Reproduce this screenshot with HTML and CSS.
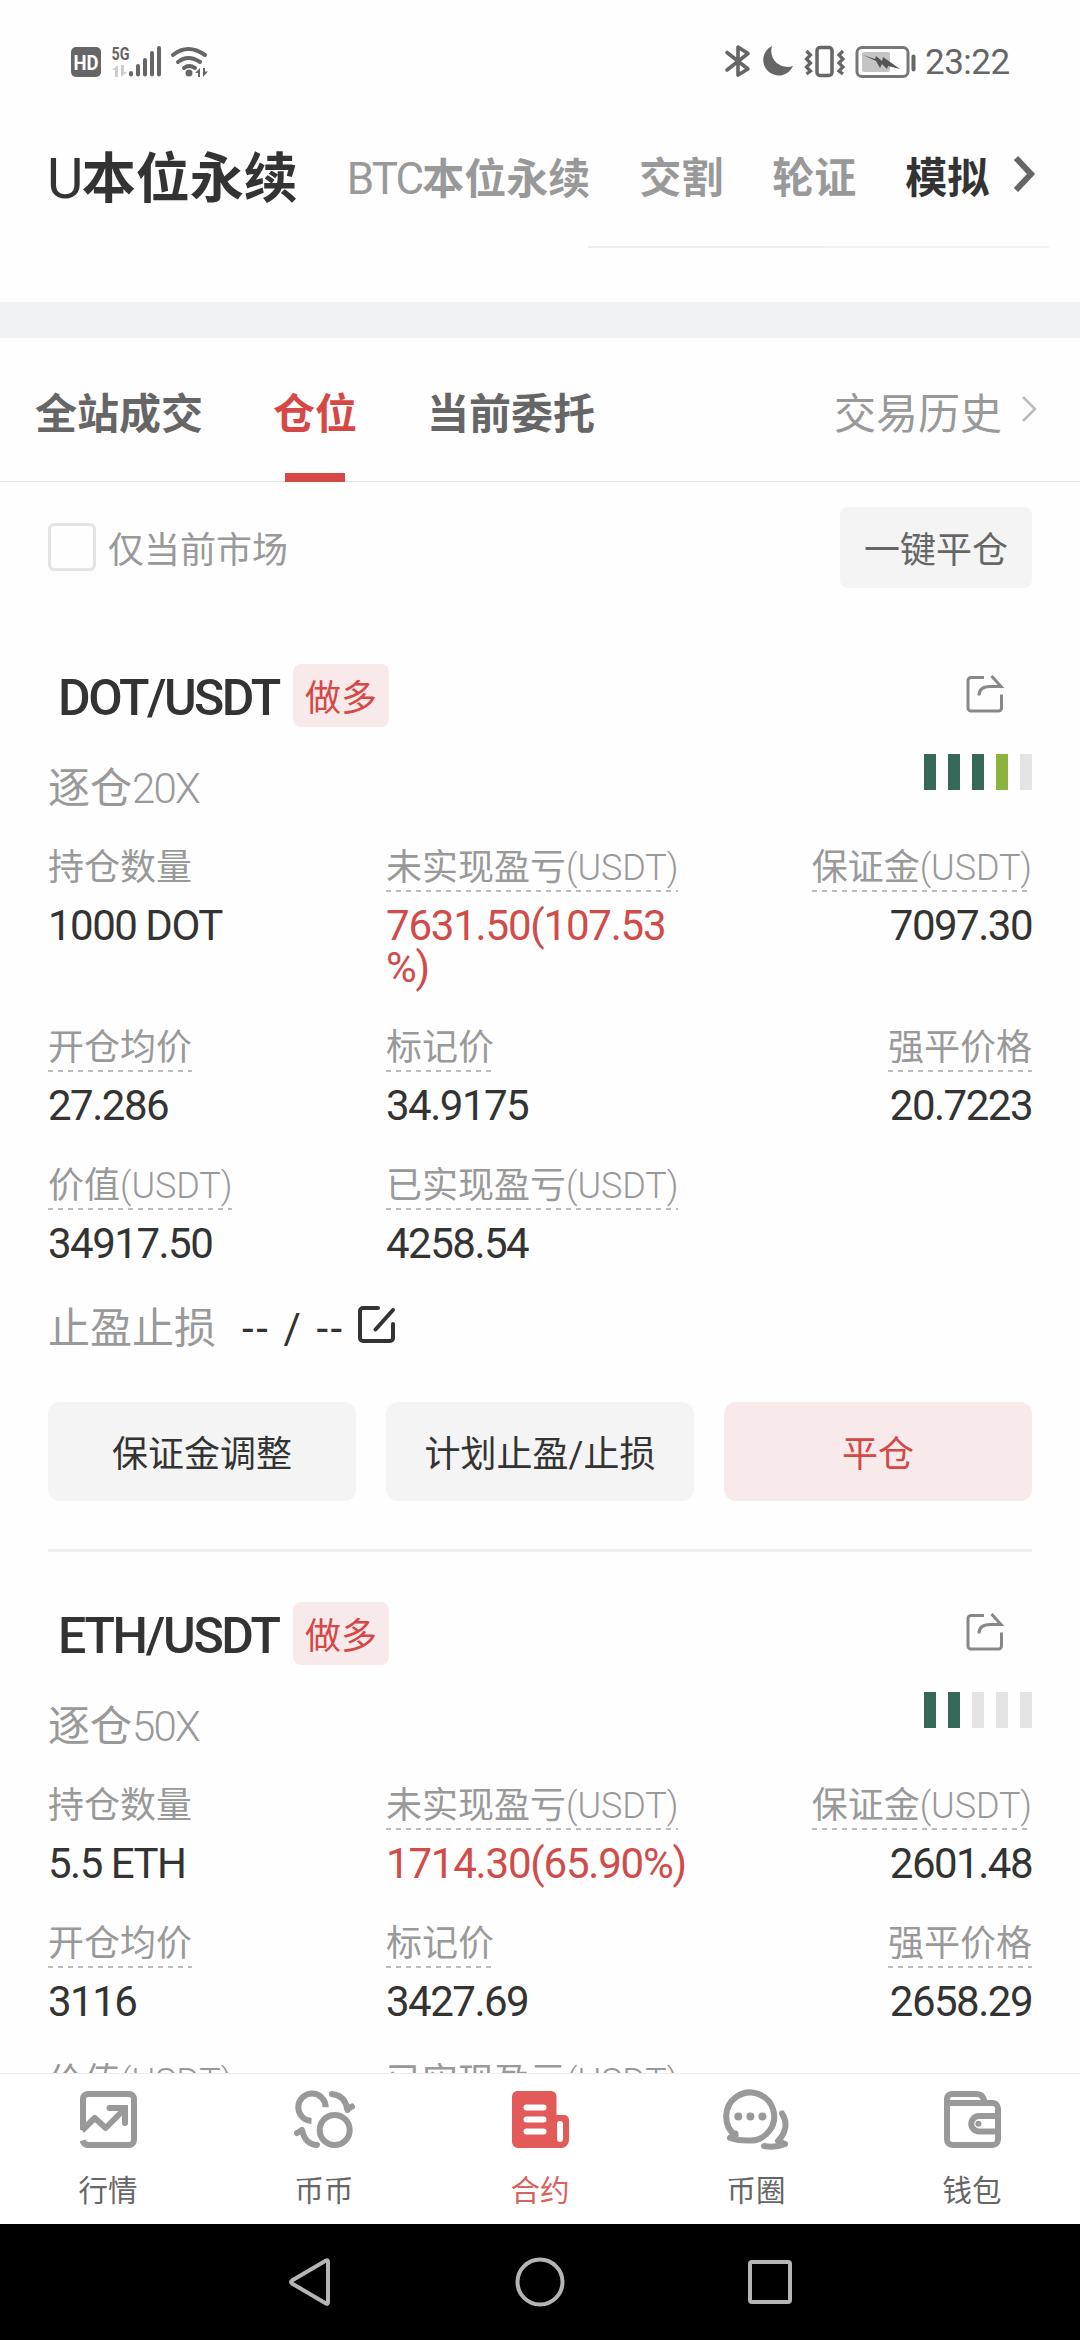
FILE: index.html
```html
<!DOCTYPE html>
<html lang="zh-CN">
<head>
<meta charset="utf-8">
<title>U本位永续</title>
<link rel="stylesheet" href="styles.css">
</head>
<body>
<div class="screen">
  <header class="status">
    <div class="status-left">
      <svg width="140" height="36" viewBox="0 0 140 36">
        <rect x="1" y="4" width="30" height="30" rx="5" fill="#666"/>
        <text x="3.5" y="26.5" class="hd" textLength="25" lengthAdjust="spacingAndGlyphs">HD</text>
        <text x="41.500" y="17" class="fiveg" textLength="18" lengthAdjust="spacingAndGlyphs">5G</text>
        <g fill="#ccc"><path d="M42 27l6-5v12h-3v-7zM57 29l-6 5V22h3v7z"/></g>
        <g stroke="#666" stroke-width="4" stroke-linecap="round"><path d="M61 30v1.500M68 23v8.500M75 17v14.500M82 10v21.500M89 5v26.500"/></g>
        <g fill="none" stroke="#666" stroke-width="4" stroke-linecap="round"><path d="M103 12q15-12 32 0M108 19q10-8 22 0M114 25q5-4 11 0"/></g>
        <circle cx="119" cy="30" r="3.500" fill="#666"/>
        <path d="M125 30l5-5v9h-2v-4zM138 28.500l-5 5.500v-9h2v3.500z" fill="#666"/>
      </svg>
    </div>
    <div class="status-right">
      <svg width="192" height="36" viewBox="0 0 192 36">
        <path d="M2 9.500L23 26 13 32V4l10 6.500L2 27" fill="none" stroke="#666" stroke-width="3.600" stroke-linejoin="round" stroke-linecap="round"/>
        <path d="M47 3a15.500 15.500 0 1 0 21 20C56 27 43 17 47 3z" fill="#666"/>
        <rect x="92" y="4.500" width="15" height="28" rx="3" fill="none" stroke="#666" stroke-width="3.500"/>
        <path d="M81.500 8l4 4-4 4 4 4-4 4 4 4-4 3M118 8l-4 4 4 4-4 4 4 4-4 4 4 3" fill="none" stroke="#666" stroke-width="3.200"/>
        <rect x="132" y="4.500" width="51" height="29" rx="5" fill="none" stroke="#777" stroke-width="3"/>
        <rect x="137" y="9" width="28" height="20" rx="2" fill="#c4c4c4"/>
        <path d="M138 12l12 4 1-3 6 5 1-4 17 12-12-3-1 3-5-5-2 4-4-7z" fill="#555"/>
        <path d="M188.500 13.500v13" stroke="#666" stroke-width="4" stroke-linecap="round"/>
      </svg>
      <span class="clock">23:22</span>
    </div>
  </header>

  <nav class="markets">
    <span class="market market-on"><span class="market-latin-lg">U</span>本位永续</span>
    <span class="market"><span class="market-latin">BTC</span>本位永续</span>
    <span class="market">交割</span>
    <span class="market">轮证</span>
    <span class="market market-dark">模拟</span>
    <svg class="market-arrow" width="24" height="38" viewBox="0 0 24 38"><path d="M3 3l15 16L3 35" fill="none" stroke="#666" stroke-width="6"/></svg>
  </nav>
  <div class="ratio"><i class="ratio-sell"></i><i class="ratio-buy"></i></div>
  <div class="band"></div>

  <nav class="tabs">
    <span class="tab">全站成交</span>
    <span class="tab tab-on">仓位</span>
    <span class="tab">当前委托</span>
    <span class="history">交易历史</span>
    <svg class="history-arrow" width="18" height="30" viewBox="0 0 18 30"><path d="M3 3l12 12L3 27" fill="none" stroke="#bbb" stroke-width="2.500"/></svg>
  </nav>

  <main class="content">
    <div class="filter">
      <i class="checkbox"></i>
      <span class="filter-label">仅当前市场</span>
      <span class="close-all">一键平仓</span>
    </div>

    <section class="card">
      <div class="card-head">
        <span class="pair pair-dot">DOT/USDT</span>
        <span class="side">做多</span>
        <svg class="share" width="42" height="42" viewBox="0 0 42 42"><path d="M20 4.500H7a3 3 0 0 0-3 3V35a3 3 0 0 0 3 3h27.500a3 3 0 0 0 3-3V21.500M15 22.500q0-9 11-9h11L27.500 3" fill="none" stroke="#888" stroke-width="3"/></svg>
      </div>
      <div class="card-sub">
        <span class="leverage">逐仓<span class="lev-latin">20X</span></span>
        <span class="risk"><i class="bar bar-dark"></i><i class="bar bar-dark"></i><i class="bar bar-dark"></i><i class="bar bar-lime"></i><i class="bar"></i></span>
      </div>
      <div class="stats">
        <div class="stat"><span class="label label-plain">持仓数量</span><span class="value">1000 DOT</span></div>
        <div class="stat"><span class="label">未实现盈亏<span class="unit">(USDT)</span></span><span class="value value-up">7631.50(107.53<br>%)</span></div>
        <div class="stat stat-right"><span class="label">保证金<span class="unit">(USDT)</span></span><span class="value">7097.30</span></div>
        <div class="stat"><span class="label">开仓均价</span><span class="value">27.286</span></div>
        <div class="stat"><span class="label">标记价</span><span class="value">34.9175</span></div>
        <div class="stat stat-right"><span class="label">强平价格</span><span class="value">20.7223</span></div>
        <div class="stat"><span class="label">价值<span class="unit">(USDT)</span></span><span class="value">34917.50</span></div>
        <div class="stat"><span class="label">已实现盈亏<span class="unit">(USDT)</span></span><span class="value">4258.54</span></div>
      </div>
      <div class="stops">
        <span class="stops-label">止盈止损</span>
        <span class="stops-value">-- / --</span>
        <svg width="40" height="40" viewBox="0 0 40 40"><path d="M21 4H6a3 3 0 0 0-3 3v27a3 3 0 0 0 3 3h27a3 3 0 0 0 3-3V20M18.500 25.500L36 6" fill="none" stroke="#333" stroke-width="4" stroke-linecap="round"/></svg>
      </div>
      <div class="actions">
        <span class="btn">保证金调整</span>
        <span class="btn">计划止盈/止损</span>
        <span class="btn btn-red">平仓</span>
      </div>
    </section>

    <section class="card">
      <div class="card-head">
        <span class="pair pair-eth">ETH/USDT</span>
        <span class="side">做多</span>
        <svg class="share" width="42" height="42" viewBox="0 0 42 42"><path d="M20 4.500H7a3 3 0 0 0-3 3V35a3 3 0 0 0 3 3h27.500a3 3 0 0 0 3-3V21.500M15 22.500q0-9 11-9h11L27.500 3" fill="none" stroke="#888" stroke-width="3"/></svg>
      </div>
      <div class="card-sub">
        <span class="leverage">逐仓<span class="lev-latin">50X</span></span>
        <span class="risk"><i class="bar bar-dark"></i><i class="bar bar-dark"></i><i class="bar"></i><i class="bar"></i><i class="bar"></i></span>
      </div>
      <div class="stats">
        <div class="stat"><span class="label label-plain">持仓数量</span><span class="value">5.5 ETH</span></div>
        <div class="stat"><span class="label">未实现盈亏<span class="unit">(USDT)</span></span><span class="value value-up">1714.30(65.90%)</span></div>
        <div class="stat stat-right"><span class="label">保证金<span class="unit">(USDT)</span></span><span class="value">2601.48</span></div>
        <div class="stat"><span class="label">开仓均价</span><span class="value">3116</span></div>
        <div class="stat"><span class="label">标记价</span><span class="value">3427.69</span></div>
        <div class="stat stat-right"><span class="label">强平价格</span><span class="value">2658.29</span></div>
        <div class="stat"><span class="label">价值<span class="unit">(USDT)</span></span></div>
        <div class="stat"><span class="label">已实现盈亏<span class="unit">(USDT)</span></span></div>
      </div>
    </section>
  </main>

  <nav class="dock">
    <div class="dock-item">
      <svg width="66" height="66" viewBox="0 0 66 66" fill="none" stroke="#999" stroke-width="6"><path d="M8 43V12a5 5 0 0 1 5-5h41a5 5 0 0 1 5 5v41a5 5 0 0 1-5 5H13q-4 0-5.500-4.500"/><path d="M7 43.500L19.700 31l11 10L49 22.500" stroke-linejoin="round"/><path d="M34.500 21H50v15" stroke-linecap="round"/></svg>
      <span>行情</span>
    </div>
    <div class="dock-item">
      <svg width="66" height="66" viewBox="0 0 66 66" fill="none" stroke="#999" stroke-width="6"><path d="M34.700 20.300A13.700 13.700 0 1 0 20.500 34"/><circle cx="43.700" cy="43" r="15"/><path d="M41 7c9 1 14 6 15.500 16M61 19.500l-5 2.500M26 58C17 57 13 52 11 43M6 46l5-3" stroke-linecap="round"/></svg>
      <span>币币</span>
    </div>
    <div class="dock-item dock-on">
      <svg width="66" height="66" viewBox="0 0 66 66"><path d="M10 4h34a5.500 5.500 0 0 1 5.500 5.500V28H57a5 5 0 0 1 5 5v20a8 8 0 0 1-8 8H11a6 6 0 0 1-6-6V9.500A5.500 5.500 0 0 1 10 4z" fill="#e25b58"/><path d="M19.500 20.500H36.500M19.500 32.500H36.500M19.500 44.500H36.500" stroke="#fff" stroke-width="6" stroke-linecap="round"/><rect x="50" y="34" width="6" height="21" rx="3" fill="#fff"/></svg>
      <span>合约</span>
    </div>
    <div class="dock-item">
      <svg width="66" height="66" viewBox="0 0 66 66" fill="none" stroke="#999" stroke-width="6" stroke-linecap="round" stroke-linejoin="round"><path d="M12.500 48.500A24 24 0 1 1 27 53.500Q16 54 7 50.800q6 .5 5.500-4.300"/><path d="M59 26.500c6 9 4 19-4 27.500l7 3q-9 4-21 2"/><g fill="#999" stroke="none"><circle cx="15.300" cy="29.500" r="4"/><circle cx="27.400" cy="29.500" r="4"/><circle cx="39.400" cy="29.500" r="4"/></g></svg>
      <span>币圈</span>
    </div>
    <div class="dock-item">
      <svg width="66" height="66" viewBox="0 0 66 66" fill="none" stroke="#999" stroke-width="6"><path d="M8 16h45.500a5.500 5.500 0 0 1 5.500 5.500v31a5.500 5.500 0 0 1-5.500 5.500h-40A5.500 5.500 0 0 1 8 52.500V12a5 5 0 0 1 5-5h25q6 0 7.500 8"/><path d="M59 29H40a7.700 7.700 0 0 0 0 15.500h19"/><circle cx="39.400" cy="36.700" r="3" fill="#999" stroke="none"/></svg>
      <span>钱包</span>
    </div>
  </nav>

  <footer class="system">
    <svg width="50" height="52" viewBox="0 0 50 52"><path d="M6 24.500L40 4.500q2-1 2 1.500v40q0 2.500-2 1.500L6 27.500q-2-1.500 0-3z" fill="none" stroke="#b5b5b5" stroke-width="4"/></svg>
    <svg width="52" height="52" viewBox="0 0 52 52"><circle cx="26" cy="26" r="22.500" fill="none" stroke="#b5b5b5" stroke-width="4"/></svg>
    <svg width="52" height="52" viewBox="0 0 52 52"><rect x="6" y="6" width="40" height="40" rx="2" fill="none" stroke="#b5b5b5" stroke-width="4"/></svg>
  </footer>
</div>
</body>
</html>
```
FILE: styles.css
```css
* { box-sizing: border-box; }
body {
  margin: 0;
  background: #fefefe;
  color: #333;
  font-family: Roboto, "Noto Sans CJK SC", sans-serif;
}
svg { display: block; flex: none; overflow: visible; }
.screen {
  width: 1080px;
  height: 2340px;
  display: flex;
  flex-direction: column;
  overflow: hidden;
}

.status {
  height: 124px;
  flex: none;
  display: flex;
  justify-content: space-between;
  padding: 43px 69px 0 70px;
}
.status-right { display: flex; gap: 8px; }
.clock { font-size: 35px; line-height: 40px; color: #666; letter-spacing: -0.5px; width: 86px; white-space: nowrap; }
.hd { font: 700 20px Roboto, sans-serif; fill: #fff; }
.fiveg { font: 700 19px Roboto, sans-serif; fill: #666; }

.markets {
  height: 122px;
  flex: none;
  display: flex;
  padding-left: 47px;
  line-height: 110px;
}
.market { font-size: 42px; font-weight: 700; color: #999; margin-right: 49px; white-space: nowrap; }
.market-on { font-size: 54px; color: #333; }
.market-dark { color: #333; margin-right: 24px; }
.market-latin-lg { font-weight: 400; font-size: 56px; letter-spacing: -1.5px; }
.market-latin { font-weight: 400; font-size: 44px; letter-spacing: -1.9px; }
.market-arrow { margin-top: 31px; }
.ratio { height: 2px; flex: none; display: flex; padding-left: 588px; }
.ratio-sell { width: 236px; background: #f1ebec; }
.ratio-buy { width: 225px; background: #eef3f4; }
.band { height: 36px; flex: none; margin-top: 54px; background: #f0f2f4; }

.tabs {
  height: 144px;
  flex: none;
  display: flex;
  padding-left: 35px;
  border-bottom: 1px solid #e2e2e2;
  line-height: 153px;
}
.tab { height: 144px; font-size: 42px; font-weight: 700; color: #666; margin-right: 70px; white-space: nowrap; }
.tab-on {
  color: #d64846;
  background: linear-gradient(#d64846, #d64846) center bottom / 60px 9px no-repeat;
}
.history { margin-left: auto; font-size: 42px; color: #999; }
.history-arrow { margin: 56px 42px 0 18px; }

.content { flex: 1; min-height: 0; overflow: hidden; padding: 25px 48px 0; }
.filter { height: 157px; display: flex; align-items: flex-start; font-size: 36px; line-height: 85px; }
.checkbox { width: 48px; height: 48px; margin-top: 16px; border: 3px solid #e4e4e4; border-radius: 6px; }
.filter-label { margin-left: 12px; color: #999; line-height: 89px; }
.close-all { margin-left: auto; width: 192px; height: 81px; border-radius: 8px; background: #f4f4f4; color: #666; text-align: center; line-height: 89px; }

.card + .card { margin-top: 48px; padding-top: 50px; border-top: 3px solid #f0f0f0; }
.card-head { height: 63px; display: flex; }
.pair { width: 235px; margin-left: 10px; font-size: 50px; font-weight: 500; line-height: 69px; white-space: nowrap; }
.pair-dot { letter-spacing: -2.5px; }
.pair-eth { letter-spacing: -2.3px; }
.side { width: 96px; border-radius: 8px; background: #f8eaea; color: #d64846; font-size: 36px; line-height: 71px; text-align: center; }
.share { margin: 9px 26px 0 auto; }
.card-sub { height: 70px; margin-top: 27px; display: flex; justify-content: space-between; }
.leverage { font-size: 42px; line-height: 70px; color: #999; }
.lev-latin { font-weight: 300; letter-spacing: -1.8px; }
.risk { display: flex; gap: 12px; }
.bar { width: 12px; height: 36px; background: #e4e4e4; }
.bar-dark { background: #356858; }
.bar-lime { background: #8bb33d; }

.stats { margin-top: 22px; display: grid; grid-template-columns: repeat(3, 308px); gap: 38px 30px; }
.stat { display: flex; flex-direction: column; align-items: flex-start; }
.stat-right { align-items: flex-end; }
.label {
  height: 46px;
  font-size: 36px;
  line-height: 44px;
  color: #999;
  white-space: nowrap;
  background: repeating-linear-gradient(90deg, #bbb 0 5px, transparent 5px 10px) left bottom / 100% 2px no-repeat;
}
.label-plain { background: none; }
.unit { font-weight: 300; letter-spacing: -0.1px; }
.value { margin: 13px 0 -1px; font-size: 42px; line-height: 42px; letter-spacing: -1.5px; white-space: nowrap; }
.value-up { color: #d14b49; letter-spacing: -1.2px; }

.stops { margin-top: 40px; display: flex; height: 50px; line-height: 50px; font-size: 42px; }
.stops-label { color: #999; width: 194px; }
.stops-value { width: 115px; letter-spacing: 2.6px; white-space: nowrap; }
.actions { margin-top: 48px; display: grid; grid-template-columns: repeat(3, 1fr); gap: 30px; }
.btn { height: 99px; border-radius: 12px; background: #f4f4f4; font-size: 36px; line-height: 107px; text-align: center; }
.btn-red { background: #f8eaea; color: #d64846; }

.dock { height: 151px; flex: none; display: flex; border-top: 1px solid #ececec; background: #fff; }
.dock-item { flex: 1; display: flex; flex-direction: column; align-items: center; padding-top: 13px; font-size: 29.5px; line-height: 76px; color: #666; }
.dock-on { color: #d9625f; }
.system { height: 116px; flex: none; display: flex; background: #000; padding: 32px 0 0 286px; }
.system svg + svg { margin-left: 178px; }
```
